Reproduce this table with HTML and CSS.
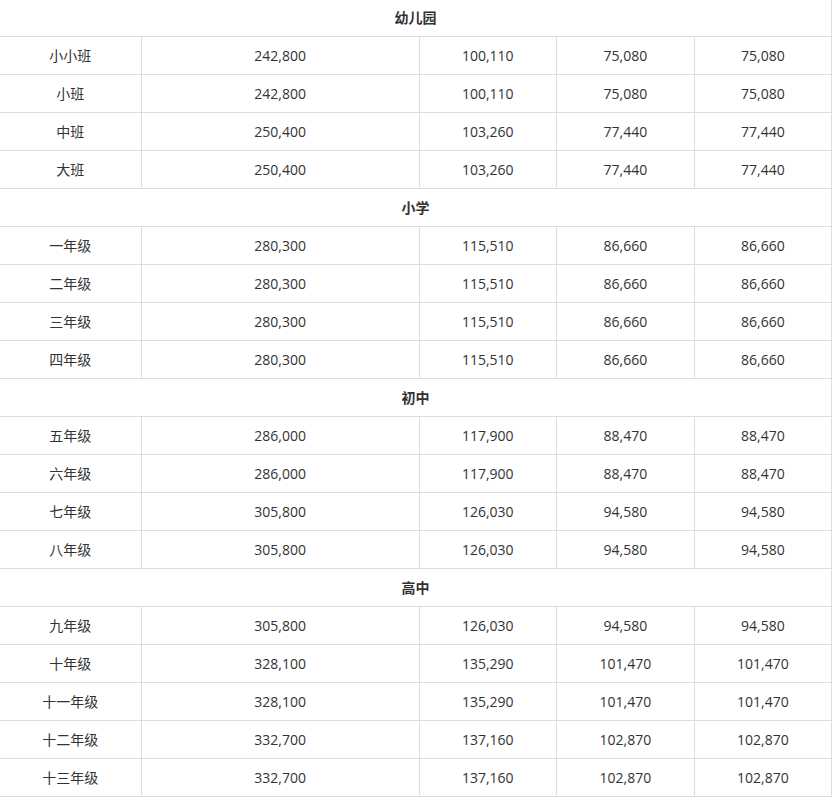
FILE: index.html
```html
<!DOCTYPE html>
<html lang="zh-CN">
<head>
<meta charset="utf-8">
<title>学费表</title>
<link rel="stylesheet" href="styles.css">
</head>
<body>
<table class="fees">
  <colgroup>
    <col class="c1"><col class="c2"><col class="c3"><col class="c4"><col class="c5">
  </colgroup>
  <tbody>
    <tr class="group first"><th colspan="5">幼儿园</th></tr>
    <tr><td>小小班</td><td>242,800</td><td>100,110</td><td>75,080</td><td>75,080</td></tr>
    <tr><td>小班</td><td>242,800</td><td>100,110</td><td>75,080</td><td>75,080</td></tr>
    <tr><td>中班</td><td>250,400</td><td>103,260</td><td>77,440</td><td>77,440</td></tr>
    <tr><td>大班</td><td>250,400</td><td>103,260</td><td>77,440</td><td>77,440</td></tr>
    <tr class="group"><th colspan="5">小学</th></tr>
    <tr><td>一年级</td><td>280,300</td><td>115,510</td><td>86,660</td><td>86,660</td></tr>
    <tr><td>二年级</td><td>280,300</td><td>115,510</td><td>86,660</td><td>86,660</td></tr>
    <tr><td>三年级</td><td>280,300</td><td>115,510</td><td>86,660</td><td>86,660</td></tr>
    <tr><td>四年级</td><td>280,300</td><td>115,510</td><td>86,660</td><td>86,660</td></tr>
    <tr class="group"><th colspan="5">初中</th></tr>
    <tr><td>五年级</td><td>286,000</td><td>117,900</td><td>88,470</td><td>88,470</td></tr>
    <tr><td>六年级</td><td>286,000</td><td>117,900</td><td>88,470</td><td>88,470</td></tr>
    <tr><td>七年级</td><td>305,800</td><td>126,030</td><td>94,580</td><td>94,580</td></tr>
    <tr><td>八年级</td><td>305,800</td><td>126,030</td><td>94,580</td><td>94,580</td></tr>
    <tr class="group"><th colspan="5">高中</th></tr>
    <tr><td>九年级</td><td>305,800</td><td>126,030</td><td>94,580</td><td>94,580</td></tr>
    <tr><td>十年级</td><td>328,100</td><td>135,290</td><td>101,470</td><td>101,470</td></tr>
    <tr><td>十一年级</td><td>328,100</td><td>135,290</td><td>101,470</td><td>101,470</td></tr>
    <tr><td>十二年级</td><td>332,700</td><td>137,160</td><td>102,870</td><td>102,870</td></tr>
    <tr><td>十三年级</td><td>332,700</td><td>137,160</td><td>102,870</td><td>102,870</td></tr>
  </tbody>
</table>
</body>
</html>
```
FILE: styles.css
```css
html, body {
  margin: 0;
  padding: 0;
  background: #fff;
}

body {
  font-family: "Open Sans", "Noto Sans CJK SC", sans-serif;
  font-size: 14px;
  color: #333;
}

.fees {
  border-collapse: collapse;
  table-layout: fixed;
  width: 832px;
  border-left: hidden;
  border-top: hidden;
  border-right: 1px solid #ddd;
}

.c1 { width: 141px; }
.c2 { width: 278px; }
.c3 { width: 137px; }
.c4 { width: 138px; }
.c5 { width: 137px; }

.fees td,
.fees th {
  border: 1px solid #ddd;
  padding: 0;
  height: 37px;
  text-align: center;
  vertical-align: middle;
  line-height: 20px;
}

.fees th {
  font-weight: bold;
  font-size: 14px;
}

.fees .first th {
  height: 36px;
}
```
